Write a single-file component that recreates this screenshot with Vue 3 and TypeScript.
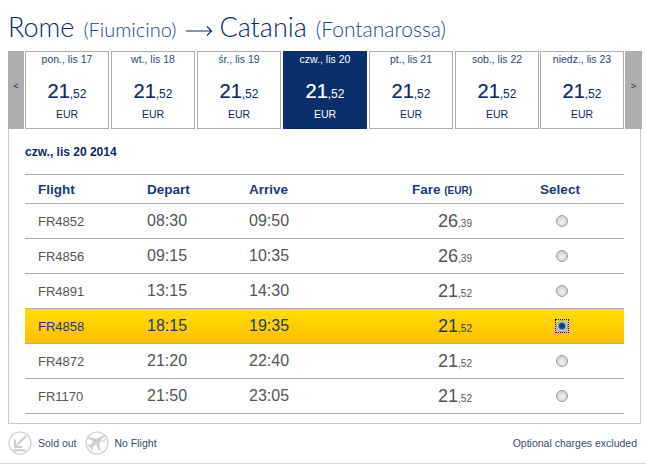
<script setup lang="ts">
interface Day {
  label: string
  active?: boolean
}

interface FlightRow {
  code: string
  depart: string
  arrive: string
  whole: string
  cents: string
  selected?: boolean
}

const days: Day[] = [
  { label: 'pon., lis 17' },
  { label: 'wt., lis 18' },
  { label: 'śr., lis 19' },
  { label: 'czw., lis 20', active: true },
  { label: 'pt., lis 21' },
  { label: 'sob., lis 22' },
  { label: 'niedz., lis 23' },
]

const flights: FlightRow[] = [
  { code: 'FR4852', depart: '08:30', arrive: '09:50', whole: '26', cents: '39' },
  { code: 'FR4856', depart: '09:15', arrive: '10:35', whole: '26', cents: '39' },
  { code: 'FR4891', depart: '13:15', arrive: '14:30', whole: '21', cents: '52' },
  { code: 'FR4858', depart: '18:15', arrive: '19:35', whole: '21', cents: '52', selected: true },
  { code: 'FR4872', depart: '21:20', arrive: '22:40', whole: '21', cents: '52' },
  { code: 'FR1170', depart: '21:50', arrive: '23:05', whole: '21', cents: '52' },
]
</script>

<template>
  <div class="page">
    <h1 class="title">
      <span>Rome</span>
      <small>(Fiumicino)</small>
      <svg class="arrow" width="27" height="12" viewBox="0 0 27 12">
        <path d="M0 6h25.500M21 1.500l4.500 4.500-4.500 4.500" fill="none" stroke="#0b2a66" stroke-width="1.100" />
      </svg>
      <span>Catania</span>
      <small>(Fontanarossa)</small>
    </h1>

    <div class="days">
      <div class="nav prev">&lt;</div>
      <div v-for="day in days" :key="day.label" class="day" :class="{ active: day.active }">
        <div class="day-label">{{ day.label }}</div>
        <div class="day-price">21<span>,52</span></div>
        <div class="day-cur">EUR</div>
      </div>
      <div class="nav next">&gt;</div>
    </div>

    <div class="panel">
      <div class="date">czw., lis 20 2014</div>
      <div class="table">
        <div class="row head">
          <div class="c-flight">Flight</div>
          <div>Depart</div>
          <div>Arrive</div>
          <div class="c-fare">Fare <small>(EUR)</small></div>
          <div class="c-select">Select</div>
        </div>
        <div v-for="f in flights" :key="f.code" class="row" :class="{ selected: f.selected }">
          <div class="c-flight code">{{ f.code }}</div>
          <div class="time">{{ f.depart }}</div>
          <div class="time">{{ f.arrive }}</div>
          <div class="c-fare fare">{{ f.whole }}<span>,{{ f.cents }}</span></div>
          <div class="c-select">
            <span class="radio" :class="{ on: f.selected }"></span>
          </div>
        </div>
      </div>
    </div>

    <div class="legend">
      <svg width="24" height="24" viewBox="0 0 24 24" fill="none" stroke="#cfcfcf">
        <circle cx="12" cy="12" r="11" stroke-width="1.200" />
        <path d="M18 5l-9.500 9.500" stroke-width="2.200" />
        <path d="M7 8.500v7.500h7.500" stroke-width="2" />
        <path d="M6 18.500h11v1.500H6z" fill="#cfcfcf" stroke-width="0.800" />
      </svg>
      <span class="sold">Sold out</span>
      <svg width="24" height="24" viewBox="0 0 24 24" fill="none" stroke="#cfcfcf">
        <circle cx="12" cy="12" r="11" stroke-width="1.200" />
        <path d="M3 15.500L21 8.500" stroke-width="1.300" />
        <path d="M18.500 4.500c1-.8 1.700-.2 1 .9L14 11l1.500 8-1.500 1-3-6.500-3.500 3 .3 2.500-1 .6L5 16l-3-1.500.7-.9 2.500.2 3.300-3.500L2.500 7.500l1-1.300 8 1.500z" fill="#cfcfcf" stroke="none" />
      </svg>
      <span class="noflight">No Flight</span>
      <span class="optional">Optional charges excluded</span>
    </div>
    <div class="rule"></div>
  </div>
</template>

<style>
html,
body {
  margin: 0;
  background: #fff;
}
</style>

<style scoped>
.page {
  width: 646px;
  height: 465px;
  overflow: hidden;
  font-family: 'Liberation Sans', Arial, sans-serif;
  color: #444;
}

.title {
  display: flex;
  align-items: baseline;
  height: 51px;
  margin: 0;
  padding: 9px 0 0 8px;
  box-sizing: border-box;
  font-family: Lato, sans-serif;
  font-size: 27px;
  line-height: 36px;
  font-weight: 300;
  color: #0b2a66;
  white-space: nowrap;
}

.title small {
  margin-left: 9px;
  font-size: 20px;
  color: #1a4a8c;
}

.title small:last-child {
  font-size: 21px;
}

.arrow {
  margin: 0 6px 0 10px;
}

.days {
  display: flex;
  gap: 2px;
  height: 78px;
  margin-left: 8px;
  width: 634px;
}

.nav {
  display: flex;
  flex: none;
  align-items: center;
  justify-content: center;
  background: #aeaeae;
  color: #0b2a66;
  font-size: 9px;
  padding-bottom: 8px;
  box-sizing: border-box;
}

.nav.prev {
  width: 16px;
  margin-right: -1px;
}

.nav.next {
  width: 17px;
  margin-left: -1px;
}

.day {
  flex: none;
  width: 84px;
  box-sizing: border-box;
  border: 1px solid #aeaeae;
  text-align: center;
  color: #0b2a66;
}

.day:nth-last-child(2) {
  margin-left: -1px;
}

.day.active {
  background: #0b2f6b;
  border-color: #0b2f6b;
  color: #fff;
}

.day-label {
  font-size: 10.500px;
  line-height: 14px;
  color: #2b4677;
}

.day.active .day-label {
  color: #fff;
}

.day-price {
  margin-top: 14px;
  font-size: 20px;
  line-height: 22px;
  -webkit-text-stroke: 0.2px currentColor;
}

.day-price span {
  font-size: 12px;
  -webkit-text-stroke: 0;
}

.day-cur {
  margin-top: 2px;
  font-size: 10.500px;
  line-height: 14px;
}

.panel {
  box-sizing: border-box;
  width: 633px;
  height: 295px;
  margin-left: 8px;
  padding: 0 16px;
  border: 1px solid #c8c8c8;
  border-top: 0;
}

.date {
  height: 45px;
  padding-top: 15px;
  box-sizing: border-box;
  font-size: 12px;
  font-weight: bold;
  line-height: 16px;
  color: #0b2a66;
}

.table {
  width: 599px;
  border-top: 1px solid #aeaeae;
}

.row {
  display: grid;
  grid-template-columns: 122px 102px 102px 121px 152px;
  align-items: center;
  height: 35px;
  box-sizing: border-box;
  border-bottom: 1px solid #aeaeae;
}

.row.head {
  height: 29px;
  font-size: 13.500px;
  font-weight: bold;
  color: #1b3a78;
}

.row.head small {
  font-size: 10px;
}

.row.selected {
  background: linear-gradient(#ffde00, #ffbf00);
}

.c-flight {
  padding-left: 13px;
}

.c-fare {
  text-align: right;
}

.c-select {
  display: flex;
  justify-content: center;
  padding-left: 24px;
}

.code {
  font-size: 13px;
  color: #555;
}

.time {
  font-size: 16px;
  color: #555;
}

.fare {
  font-size: 18px;
  color: #555;
}

.fare span {
  font-size: 10px;
}

.selected .code,
.selected .time,
.selected .fare {
  color: #1b3a78;
}

.radio {
  position: relative;
  display: block;
  box-sizing: border-box;
  width: 12px;
  height: 12px;
  margin-left: 4px;
  border-radius: 50%;
  border: 1px solid #9a9a9a;
  background: radial-gradient(circle at 50% 60%, #f4f4f4, #c4c4c4);
}

.radio.on {
  background: radial-gradient(circle, #0a3f80 0 2px, #2f86bd 3.500px, #e4e4e4 4.500px);
}

/* focus ring of the checked radio is square, not round */
.radio.on::after {
  content: '';
  position: absolute;
  inset: -2px;
  border: 1px dotted #0000c8;
}

.legend {
  display: flex;
  align-items: center;
  height: 39px;
  padding-bottom: 1px;
  box-sizing: border-box;
  margin-left: 8px;
  width: 629px;
  font-size: 10.500px;
  color: #3b4a66;
}

.sold {
  margin: 0 8px 0 6px;
}

.noflight {
  margin-left: 6px;
}

.optional {
  margin-left: auto;
}

.rule {
  height: 1px;
  background: #d8d8d8;
}
</style>
